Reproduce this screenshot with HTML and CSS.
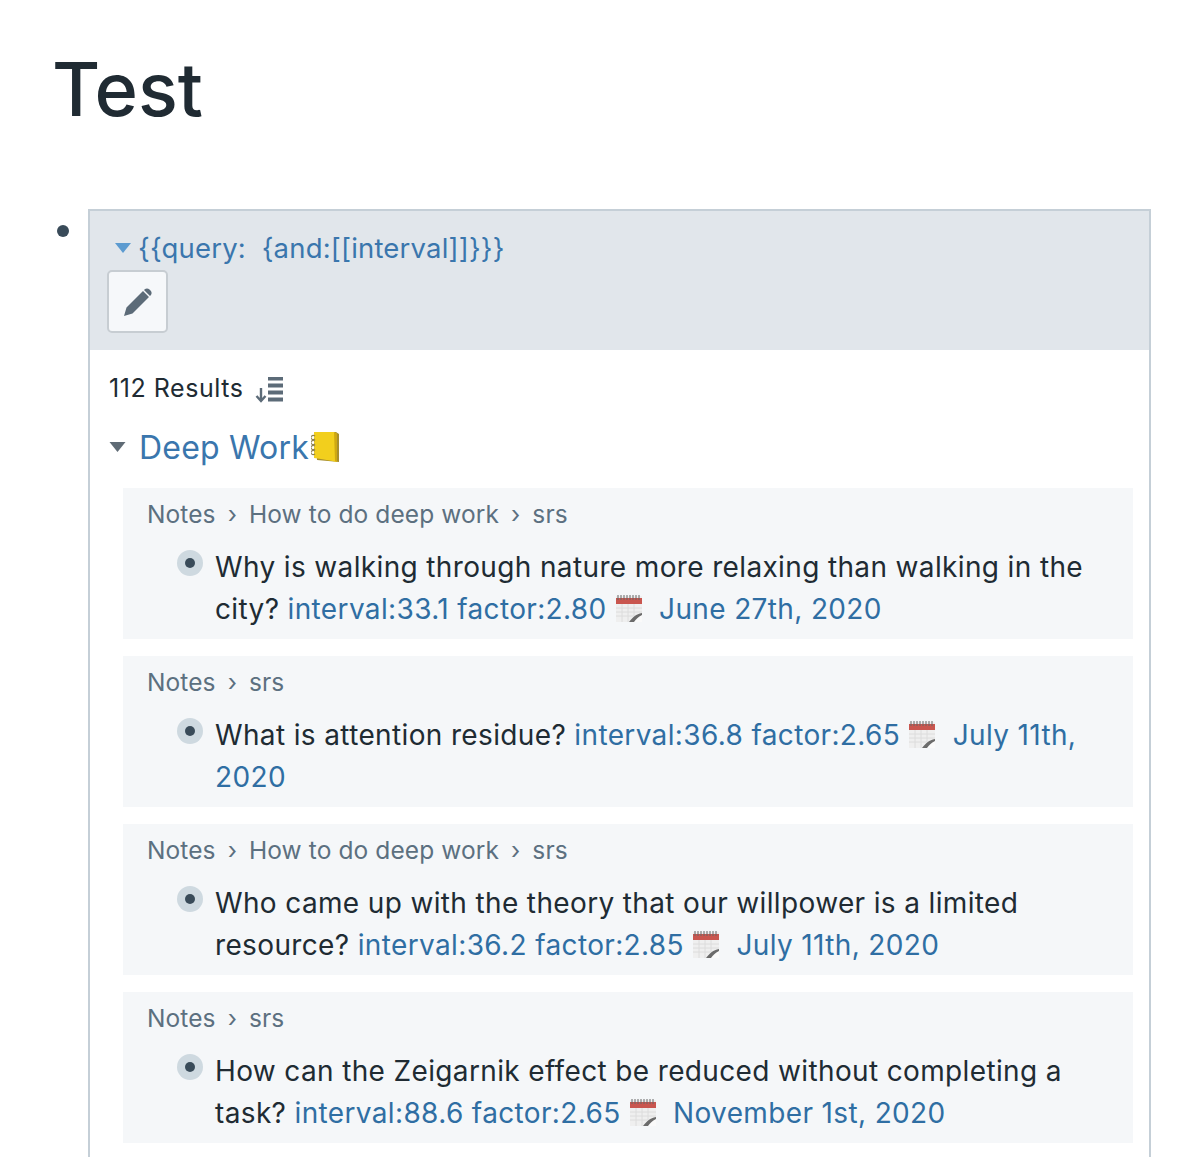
FILE: index.html
```html
<!DOCTYPE html>
<html lang="en">
<head>
    <meta charset="UTF-8">
    <title>Test</title>
    <link rel="stylesheet" href="styles.css">
</head>
<body>
    <svg class="defs" width="0" height="0">
        <symbol id="calendar" viewBox="0 0 30 30">
            <rect x="2" y="3" width="26" height="26" fill="#efefef"/>
            <path d="M28 21 L28 29 L19 29 Z" fill="#fafafa"/>
            <path d="M15 29 C19 24 22 21 28 20 L28 22 C24 24 22 26 20 29 Z" fill="#6b6b6b"/>
            <rect x="2" y="5" width="26" height="6" fill="#c9564f"/>
            <path d="M4 2v5M7 2v5M10 2v5M13 2v5M16 2v5M19 2v5M22 2v5M25 2v5" stroke="#666" stroke-width="1"/>
            <path d="M2 15h26M2 19h26M2 23h18M8 11v18M14 11v18M20 11v12" stroke="#dcdcdc" stroke-width="1"/>
        </symbol>
    </svg>

    <div class="page">
        <h1 class="title">Test</h1>

        <div class="block">
            <span class="bullet"></span>
            <div class="query">
                <div class="query-header">
                    <div class="query-line">
                        <svg class="caret" viewBox="0 0 16 10"><path d="M0 0h16L8 10z" fill="#5c9bd0"/></svg>
                        <span class="query-text">{{query: &nbsp;{and:[[interval]]}}}</span>
                    </div>
                    <button class="edit-button">
                        <svg viewBox="0 0 30 30" width="30" height="30"><path d="M1 29 L3.500 20.500 L20 4 L26 10 L9.500 26.500 Z M21.500 2.500 C23 1 25 1 26.500 2.500 L27.500 3.500 C29 5 29 7 27.500 8.500 L27 9 L21 3 Z" fill="#5c6b78"/></svg>
                    </button>
                </div>

                <div class="query-body">
                    <div class="count">
                        <span class="count-text">112 Results</span>
                        <svg viewBox="0 0 30 26" width="30" height="26">
                            <path d="M7 11v12M2.500 19l4.500 5 4.500-5" fill="none" stroke="#5c6b78" stroke-width="2.400"/>
                            <path d="M14 1.500h15M14 8.500h15M14 15.500h15M14 22.500h15" stroke="#5c6b78" stroke-width="4"/>
                        </svg>
                    </div>

                    <div class="page-ref">
                        <svg class="caret" viewBox="0 0 16 10"><path d="M0 0h16L8 10z" fill="#5f6b75"/></svg>
                        <span class="page-name">Deep Work</span>
                        <svg class="notebook" viewBox="0 0 28 32" width="28" height="32">
                            <path d="M5 2 L25 1 L28 3 L28 31 L6 29 Z" fill="#a88f2c"/>
                            <path d="M3 1 L23 1 L26 3 L26 31 C18 29 10 28 3 27 Z" fill="#f2cf1d"/>
                            <path d="M23 1 L26 3 L26 31 L24 30 Z" fill="#cfa912"/>
                            <path d="M4 5a2.500 2 0 1 0 0 3M4 10a2.500 2 0 1 0 0 3M4 15a2.500 2 0 1 0 0 3M4 20a2.500 2 0 1 0 0 3" fill="none" stroke="#8d8050" stroke-width="1.200"/>
                        </svg>
                    </div>

                    <div class="result">
                        <div class="crumbs">
                            <span>Notes</span><span class="sep">›</span><span>How to do deep work</span><span class="sep">›</span><span>srs</span>
                        </div>
                        <div class="item">
                            <span class="dot"></span>
                            <p>Why is walking through nature more relaxing than walking in the city? <a>interval:33.1 factor:2.80</a> <svg class="cal"><use href="#calendar"/></svg> <a>June 27th, 2020</a></p>
                        </div>
                    </div>

                    <div class="result">
                        <div class="crumbs">
                            <span>Notes</span><span class="sep">›</span><span>srs</span>
                        </div>
                        <div class="item">
                            <span class="dot"></span>
                            <p>What is attention residue? <a>interval:36.8 factor:2.65</a> <svg class="cal"><use href="#calendar"/></svg> <a>July 11th, 2020</a></p>
                        </div>
                    </div>

                    <div class="result">
                        <div class="crumbs">
                            <span>Notes</span><span class="sep">›</span><span>How to do deep work</span><span class="sep">›</span><span>srs</span>
                        </div>
                        <div class="item">
                            <span class="dot"></span>
                            <p>Who came up with the theory that our willpower is a limited resource? <a>interval:36.2 factor:2.85</a> <svg class="cal"><use href="#calendar"/></svg> <a>July 11th, 2020</a></p>
                        </div>
                    </div>

                    <div class="result">
                        <div class="crumbs">
                            <span>Notes</span><span class="sep">›</span><span>srs</span>
                        </div>
                        <div class="item">
                            <span class="dot"></span>
                            <p>How can the Zeigarnik effect be reduced without completing a task? <a>interval:88.6 factor:2.65</a> <svg class="cal"><use href="#calendar"/></svg> <a>November 1st, 2020</a></p>
                        </div>
                    </div>
                </div>
            </div>
        </div>
    </div>
</body>
</html>
```

FILE: styles.css
```css
* {
    margin: 0;
    padding: 0;
    box-sizing: border-box;
}

html, body {
    height: 100%;
    overflow: hidden;
}

body {
    font-family: Inter, "Noto Sans", sans-serif;
    background: #fff;
    color: #202b33;
}

.defs {
    position: absolute;
}

.page {
    height: 1157px;
    overflow: hidden;
    padding: 49px 49px 0 54px;
}

.title {
    font-size: 74px;
    font-weight: 500;
    line-height: 80px;
    color: #202b33;
    margin: 0 0 80px -2px;
}

.block {
    display: flex;
    align-items: flex-start;
}

.bullet {
    width: 12px;
    height: 12px;
    margin: 16px 19px 0 3px;
    border-radius: 50%;
    background: #394b59;
    flex: none;
}

.query {
    flex: 1;
    min-width: 0;
    border: 2px solid #c5cfd7;
    border-bottom: none;
    height: 960px;
}

.query-header {
    background: #e1e6eb;
    height: 139px;
    padding: 15px 17px 0;
}

.query-line {
    display: flex;
    align-items: center;
    gap: 7px;
    height: 44px;
    padding-left: 8px;
}

.query-line .caret {
    width: 16px;
    height: 10px;
}

.query-text {
    font-size: 27.5px;
    letter-spacing: 0.18px;
    color: #3a76ad;
}

.edit-button {
    display: flex;
    align-items: center;
    justify-content: center;
    width: 61px;
    height: 63px;
    background: #f6f8fa;
    border: 2px solid #c7cdd2;
    border-radius: 5px;
}

.query-body {
    padding: 20px 16px 0 19px;
}

.count {
    display: flex;
    align-items: center;
    gap: 10px;
    height: 40px;
    font-size: 25px;
    letter-spacing: 0.55px;
    color: #202b33;
}

.count-text {
    margin-bottom: 4px;
}

.page-ref {
    display: flex;
    align-items: center;
    height: 40px;
    margin: 17px 0 21px;
}

.page-ref .caret {
    width: 17px;
    height: 10px;
    margin-right: 13px;
}

.page-name {
    font-size: 32px;
    letter-spacing: 0.2px;
    color: #3a76ad;
}

.notebook {
    margin-left: 2px;
}

.result {
    background: #f5f7f9;
    margin: 0 0 17px 14px;
    padding: 8px 24px 9px;
}

.crumbs {
    display: flex;
    align-items: center;
    height: 36px;
    font-size: 24.5px;
    letter-spacing: 0.1px;
    color: #5c7080;
}

.sep {
    margin: 0 12px;
    font-size: 24px;
}

.item {
    display: flex;
    align-items: flex-start;
    gap: 12px;
    margin-top: 14px;
    padding-left: 30px;
}

.dot {
    position: relative;
    flex: none;
    width: 26px;
    height: 26px;
    margin-top: 4px;
    border-radius: 50%;
    background: #ced9e0;
}

.dot::after {
    content: '';
    position: absolute;
    top: 8px;
    left: 8px;
    width: 10px;
    height: 10px;
    border-radius: 50%;
    background: #394b59;
}

.item p {
    font-size: 28px;
    letter-spacing: 0.36px;
    line-height: 42px;
    color: #202b33;
}

.item a {
    color: #2f6ea3;
}

.cal {
    width: 30px;
    height: 30px;
    vertical-align: -4px;
    margin: 0 7px 0 -1px;
}
```
